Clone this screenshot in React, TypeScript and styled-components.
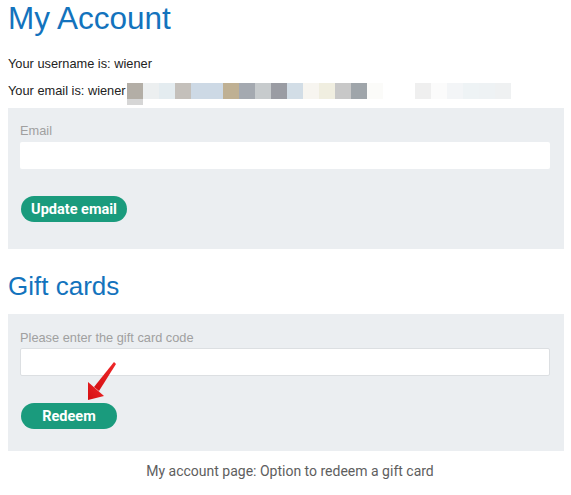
import * as React from 'react';
import styled, { createGlobalStyle } from 'styled-components';

const GlobalStyle = createGlobalStyle`
  body {
    margin: 0;
    background: #ffffff;
    font-family: 'Liberation Sans', Arial, sans-serif;
  }
`;

const Page = styled.main`
  width: 556px;
  padding: 0 7px 0 8px;
`;

const Title = styled.h1`
  margin: 0 0 14px;
  font-size: 31.5px;
  line-height: 36px;
  font-weight: 400;
  color: #1373bd;
`;

const SubTitle = styled.h2`
  margin: 22px 0 13px;
  font-size: 26px;
  line-height: 30px;
  font-weight: 400;
  color: #1373bd;
`;

const InfoLine = styled.p`
  margin: 0;
  font-size: 12.8px;
  line-height: 27px;
  color: #222;
  display: flex;
  align-items: center;
`;

const Redacted = styled.span`
  position: relative;
  display: flex;
  height: 16px;
  margin-left: 1px;
`;

const Pixel = styled.span`
  width: 16px;
  height: 16px;
`;

const PixelTail = styled.span`
  position: absolute;
  left: 0;
  top: 16px;
  width: 16px;
  height: 6px;
  background: #d6d6d6;
`;

const Panel = styled.section<{ $top: number; $bottom: number; $gap: number }>`
  position: relative;
  background: #ebeef1;
  padding: ${({ $top }) => $top}px 14px ${({ $bottom }) => $bottom}px 12px;
  margin-top: ${({ $gap }) => $gap}px;
`;

const Label = styled.label`
  display: block;
  font-size: 12.8px;
  line-height: 16px;
  color: #a0a0a0;
`;

const Input = styled.input<{ $gap: number; $bordered?: boolean }>`
  display: block;
  box-sizing: border-box;
  width: 100%;
  height: ${({ $bordered }) => ($bordered ? 28 : 27)}px;
  margin-top: ${({ $gap }) => $gap}px;
  border: ${({ $bordered }) => ($bordered ? '1px solid #dcdfe2' : 'none')};
  border-radius: 2px;
  background: #ffffff;
`;

const Button = styled.button<{ $width: number; $height: number }>`
  display: block;
  margin-top: 27px;
  margin-left: 1px;
  width: ${({ $width }) => $width}px;
  height: ${({ $height }) => $height}px;
  border: none;
  border-radius: 14px;
  background: #1a9b7d;
  color: #ffffff;
  font-family: 'Liberation Sans Narrow', 'Roboto', 'Liberation Sans', sans-serif;
  font-weight: 700;
  font-size: 14.5px;
  padding: 0;
`;

const Arrow = styled.svg`
  position: absolute;
  left: 76px;
  top: 46px;
`;

const Caption = styled.p`
  margin: 10px 0 0;
  padding-left: 8px;
  text-align: center;
  font-family: 'Roboto', 'Inter', sans-serif;
  font-size: 14px;
  line-height: 20px;
  color: #5e5e5e;
`;

const pixels = [
  '#b3aea6', '#eceff0', '#e4ecf0', '#c4c0bb', '#cdd9e5', '#cdd9e5',
  '#bfb093', '#a4a9b0', '#c7cbcd', '#9a9ca3', '#d2dde6', '#f7f5f0',
  '#f0eee0', '#c8c8c8', '#9fa5aa', '#fbfbf9', '#ffffff', '#ffffff',
  '#efefef', '#fbfbfb', '#f3f5f7', '#eef3f5', '#eef2f4', '#eff1f2'
];

const App: React.FC = () => (
  <Page>
    <GlobalStyle />
    <Title>My Account</Title>
    <InfoLine>Your username is: wiener</InfoLine>
    <InfoLine>
      Your email is: wiener
      <Redacted>
        {pixels.map((c, i) => (
          <Pixel key={i} style={{ background: c }} />
        ))}
        <PixelTail />
      </Redacted>
    </InfoLine>
    <Panel $top={15} $bottom={27} $gap={4}>
      <Label>Email</Label>
      <Input $gap={3} />
      <Button $width={106} $height={26}>Update email</Button>
    </Panel>
    <SubTitle>Gift cards</SubTitle>
    <Panel $top={16} $bottom={22} $gap={13}>
      <Label>Please enter the gift card code</Label>
      <Input $gap={2} $bordered />
      <Button $width={96} $height={26}>Redeem</Button>
      <Arrow width="36" height="44" viewBox="0 0 36 44">
        <defs>
          <linearGradient id="arrowFill" x1="1" y1="0" x2="0" y2="1">
            <stop offset="0" stopColor="#f0282a" />
            <stop offset="1" stopColor="#d40f12" />
          </linearGradient>
        </defs>
        <polygon points="30,2 32,4 15,31 10,27" fill="url(#arrowFill)" />
        <polygon points="4,22 4,40 20,36" fill="url(#arrowFill)" />
      </Arrow>
    </Panel>
    <Caption>My account page: Option to redeem a gift card</Caption>
  </Page>
);

export default App;
